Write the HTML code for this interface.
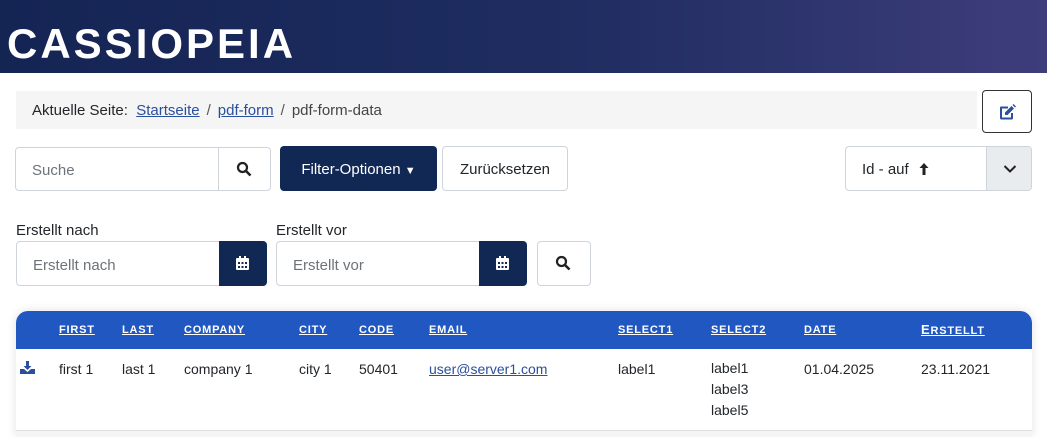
<!DOCTYPE html>
<html><head><meta charset="utf-8"><style>
*{box-sizing:border-box;margin:0;padding:0}
body{width:1047px;height:437px;overflow:hidden;background:#fff;font-family:"Liberation Sans",sans-serif;color:#22262a;position:relative}
.hdr{position:absolute;left:0;top:0;width:1047px;height:73px;background:linear-gradient(90deg,#142453 0%,#1f2d61 55%,#3e3d7b 100%)}
.logo{position:absolute;left:7px;top:20px;color:#fff;font-weight:bold;font-size:42px;letter-spacing:3px;line-height:48px}
.abs{position:absolute}
.bc{left:16px;top:91px;width:961px;height:38px;background:#f5f5f5;font-size:15px;line-height:40px;padding-left:16px;color:#22262a}
.bc a{color:#2a4f9e;text-decoration:underline}
.bc .s{color:#555;margin:0 7px}
.box{border:1px solid #ced4da;background:#fff;border-radius:4px}
.ph{color:#6d7378;font-size:15px}
.dark{background:#112855;color:#fff}
.th{position:absolute;top:324px;color:#fff;font-weight:bold;font-size:11px;text-decoration:underline;letter-spacing:.8px}
.td{position:absolute;top:361px;font-size:14px;color:#22262a}
</style></head><body>
<div class="hdr"><div class="logo">CASSIOPEIA</div></div>
<div class="abs bc">Aktuelle Seite:&nbsp; <a>Startseite</a><span class="s">/</span><a>pdf-form</a><span class="s">/</span><span style="color:#444">pdf-form-data</span></div>
<div class="abs" style="left:982px;top:90px;width:50px;height:43px;border:1px solid #333;border-radius:4px;background:#fff">
<svg style="position:absolute;left:16px;top:13px" width="17" height="16" viewBox="0 0 17 16"><path d="M1 3.5Q1 2.5 2 2.5h7v2H3v9h9V9h2v5q0 1.5-1.5 1.5h-10Q1 15.5 1 14z" fill="#2a4f9e"/><path d="M6 8.5l6.5-6.5 2.5 2.5-6.5 6.5H6z" fill="#2a4f9e"/><path d="M13.5 1l1-1 2.5 2.5-1 1z" fill="#2a4f9e"/></svg></div>

<div class="abs box" style="left:15px;top:147px;width:204px;height:44px;border-radius:4px 0 0 4px"><span class="ph abs" style="left:16px;top:14px">Suche</span></div>
<div class="abs box" style="left:218px;top:147px;width:53px;height:44px;border-radius:0 4px 4px 0"><svg class="abs" style="left:17px;top:13px" width="16" height="16" viewBox="0 0 16 16"><circle cx="6.5" cy="6.5" r="4.5" stroke="#222" stroke-width="2.2" fill="none"/><path d="M10 10l4.5 4.5" stroke="#222" stroke-width="2.6"/></svg></div>
<div class="abs dark" style="left:280px;top:146px;width:157px;height:45px;border-radius:4px;font-size:15px;line-height:47px;text-align:center">Filter-Optionen <span style="font-size:11px">▼</span></div>
<div class="abs box" style="left:442px;top:146px;width:126px;height:45px;font-size:15px;line-height:46px;text-align:center">Zurücksetzen</div>

<div class="abs box" style="left:845px;top:146px;width:187px;height:45px;overflow:hidden"><span class="abs" style="left:16px;top:14px;font-size:15px">Id - auf</span><svg class="abs" style="left:73px;top:16px" width="10" height="12" viewBox="0 0 10 12"><path d="M5 0L0.5 5h3v7h3V5h3z" fill="#222"/></svg><div class="abs" style="left:140px;top:0;width:47px;height:45px;background:#e9ecef;border-left:1px solid #ced4da"><svg class="abs" style="left:16px;top:17px" width="14" height="10" viewBox="0 0 14 10"><path d="M1.5 2l5.5 5.5L12.5 2" stroke="#222" stroke-width="2" fill="none"/></svg></div></div>

<div class="abs" style="left:16px;top:222px;font-size:15px">Erstellt nach</div>
<div class="abs" style="left:276px;top:222px;font-size:15px">Erstellt vor</div>
<div class="abs box" style="left:16px;top:241px;width:205px;height:45px;border-radius:4px 0 0 4px"><span class="ph abs" style="left:16px;top:15px">Erstellt nach</span></div>
<div class="abs dark" style="left:219px;top:241px;width:48px;height:45px;border-radius:0 4px 4px 0"><svg class="abs" style="left:17px;top:15px" width="13" height="14" viewBox="0 0 13 14"><rect x="0" y="2" width="13" height="12" rx="1" fill="#fff"/><rect x="3" y="0" width="2" height="3" fill="#fff"/><rect x="8" y="0" width="2" height="3" fill="#fff"/><g fill="#112855"><rect x="2" y="6" width="2" height="2"/><rect x="5.5" y="6" width="2" height="2"/><rect x="9" y="6" width="2" height="2"/><rect x="2" y="10" width="2" height="2"/><rect x="5.5" y="10" width="2" height="2"/><rect x="9" y="10" width="2" height="2"/></g></svg></div>
<div class="abs box" style="left:276px;top:241px;width:205px;height:45px;border-radius:4px 0 0 4px"><span class="ph abs" style="left:16px;top:15px">Erstellt vor</span></div>
<div class="abs dark" style="left:479px;top:241px;width:48px;height:45px;border-radius:0 4px 4px 0"><svg class="abs" style="left:17px;top:15px" width="13" height="14" viewBox="0 0 13 14"><rect x="0" y="2" width="13" height="12" rx="1" fill="#fff"/><rect x="3" y="0" width="2" height="3" fill="#fff"/><rect x="8" y="0" width="2" height="3" fill="#fff"/><g fill="#112855"><rect x="2" y="6" width="2" height="2"/><rect x="5.5" y="6" width="2" height="2"/><rect x="9" y="6" width="2" height="2"/><rect x="2" y="10" width="2" height="2"/><rect x="5.5" y="10" width="2" height="2"/><rect x="9" y="10" width="2" height="2"/></g></svg></div>
<div class="abs box" style="left:537px;top:241px;width:54px;height:45px"><svg class="abs" style="left:17px;top:13px" width="16" height="16" viewBox="0 0 16 16"><circle cx="6.5" cy="6.5" r="4.5" stroke="#222" stroke-width="2.2" fill="none"/><path d="M10 10l4.5 4.5" stroke="#222" stroke-width="2.6"/></svg></div>

<div class="abs" style="left:16px;top:311px;width:1016px;height:126px;background:#fff;box-shadow:0 0 10px rgba(0,0,0,.12);border-radius:12px 12px 0 0"></div>
<div class="abs" style="left:16px;top:311px;width:1016px;height:38px;background:#2157c1;border-radius:12px 12px 0 0"></div>
<div class="abs" style="left:16px;top:430px;width:1016px;height:1px;background:#ddd"></div>
<div class="abs" style="left:16px;top:431px;width:1016px;height:6px;background:#f5f5f5"></div>
<span class="th" style="left:59px">FIRST</span><span class="th" style="left:122px">LAST</span><span class="th" style="left:184px">COMPANY</span><span class="th" style="left:299px">CITY</span><span class="th" style="left:359px">CODE</span><span class="th" style="left:429px">EMAIL</span><span class="th" style="left:618px">SELECT1</span><span class="th" style="left:711px">SELECT2</span><span class="th" style="left:804px">DATE</span><span class="th" style="left:921px;top:322px"><span style="font-size:13px">E</span>RSTELLT</span>
<svg class="abs" style="left:20px;top:361px" width="15" height="13" viewBox="0 0 15 13"><path d="M6 0h3v5h2.5L7.5 9 3.5 5H6z" fill="#2a4f9e"/><path d="M0 8h4l3.5 3L11 8h4v5H0z" fill="#2a4f9e"/></svg>
<span class="td" style="left:59px">first 1</span><span class="td" style="left:122px">last 1</span><span class="td" style="left:184px">company 1</span><span class="td" style="left:299px">city 1</span><span class="td" style="left:359px">50401</span><span class="td" style="left:429px;color:#2a4f9e;text-decoration:underline">user@server1.com</span><span class="td" style="left:618px">label1</span><span class="td" style="left:711px;line-height:21px;top:358px">label1<br>label3<br>label5</span><span class="td" style="left:804px">01.04.2025</span><span class="td" style="left:921px">23.11.2021</span>
</body></html>
